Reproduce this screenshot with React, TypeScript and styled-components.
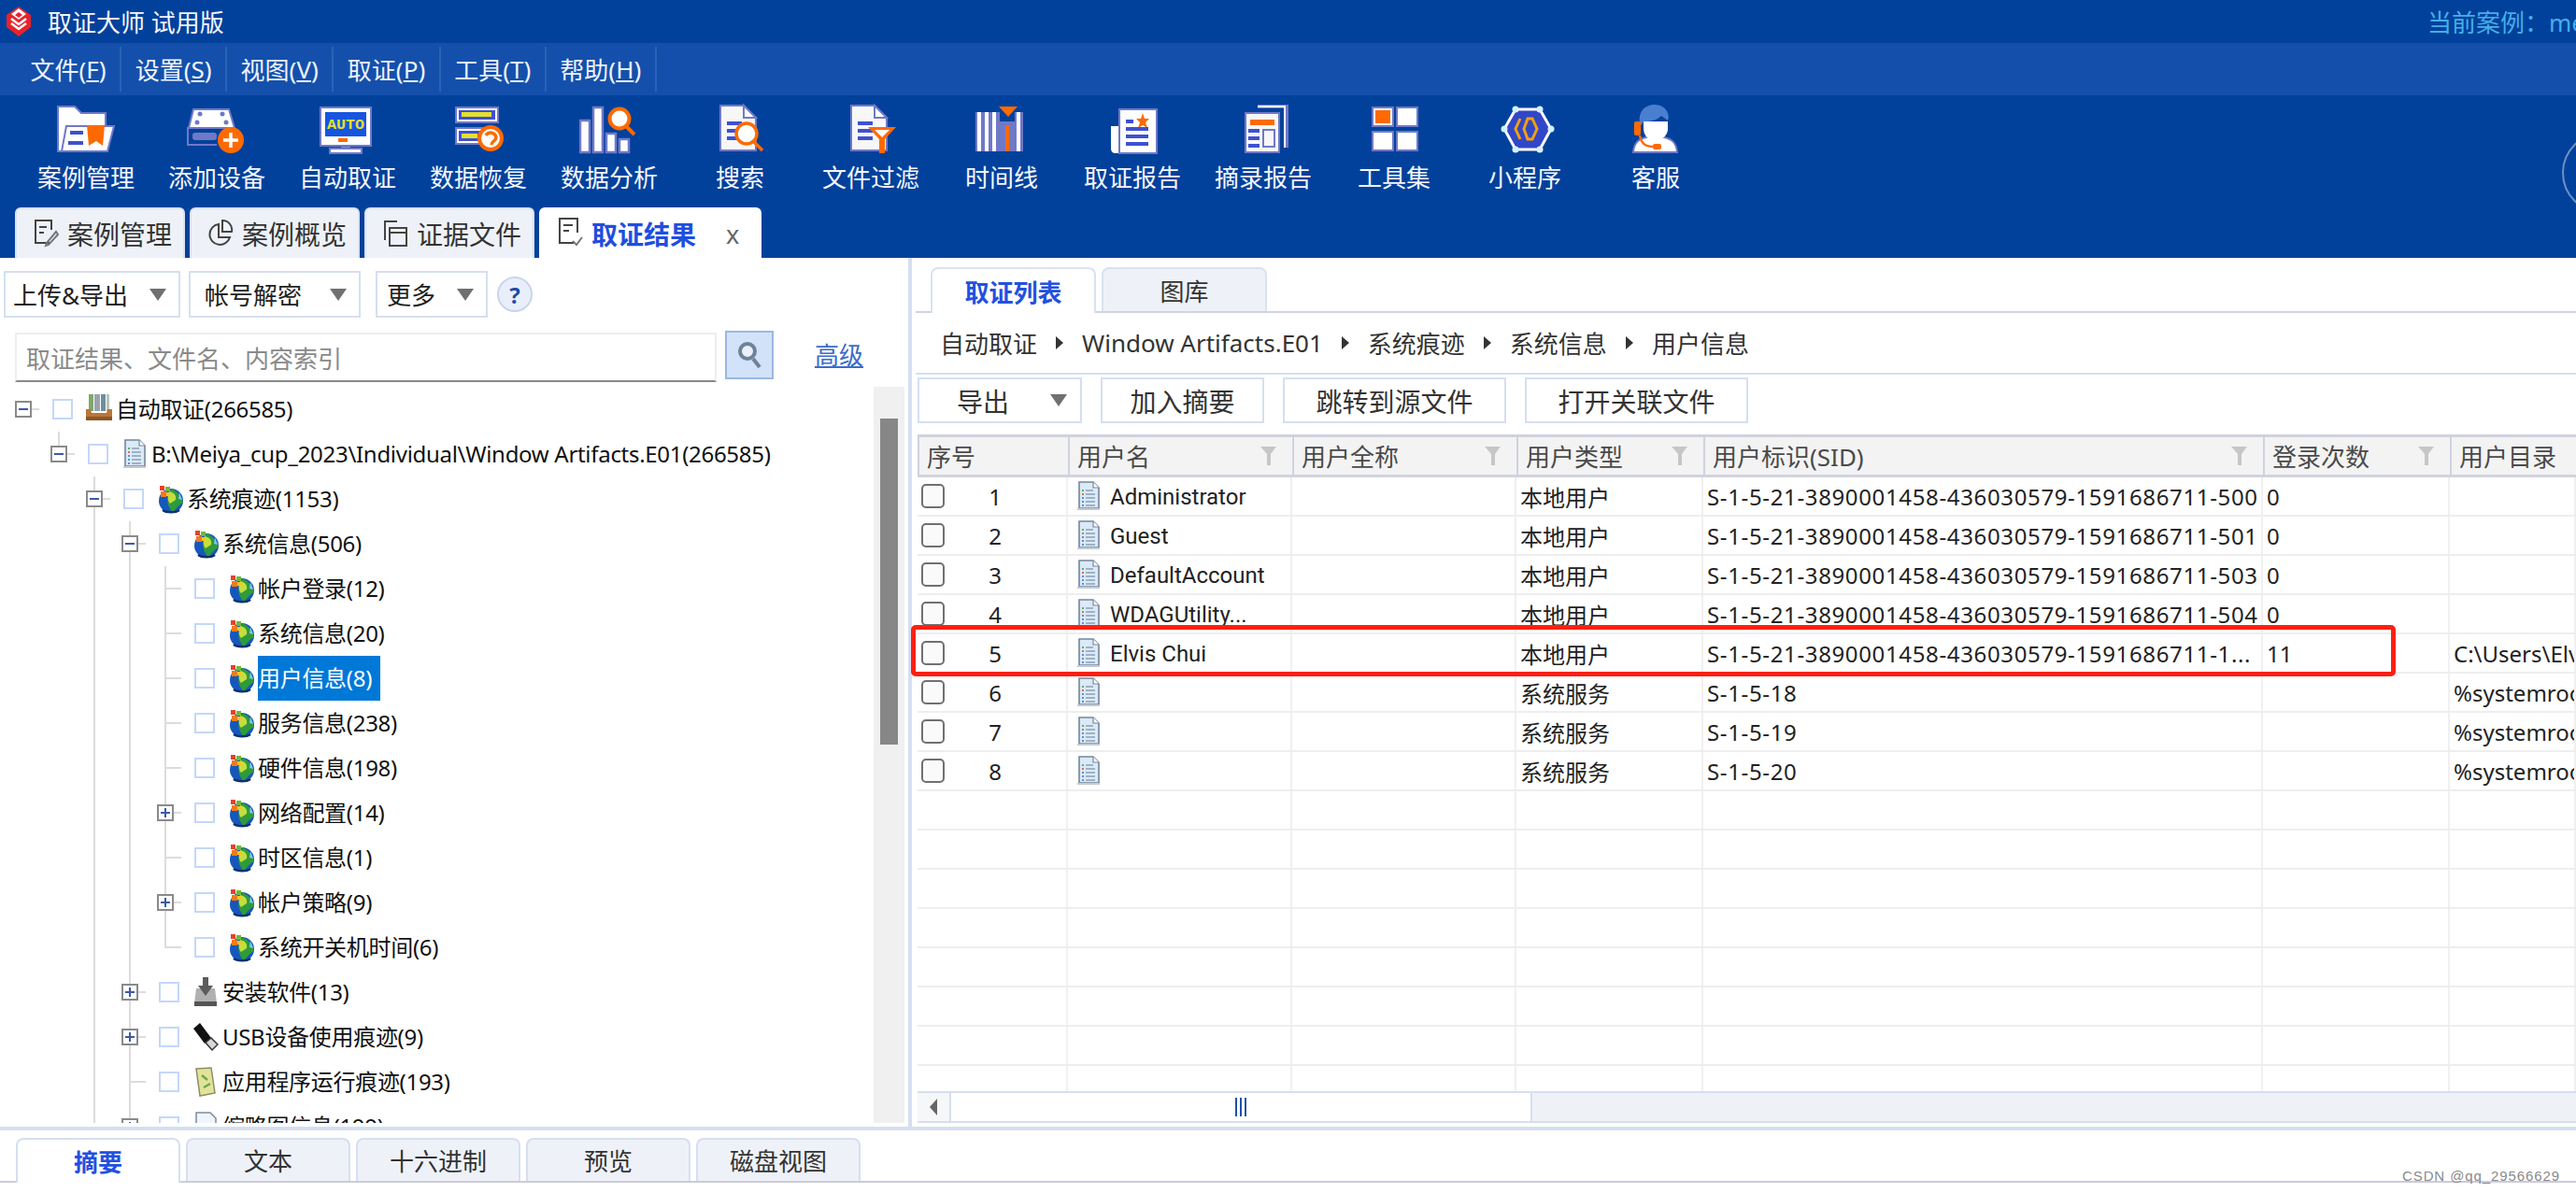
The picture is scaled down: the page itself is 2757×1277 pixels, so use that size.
import React from 'react';
import styled, { createGlobalStyle } from 'styled-components';

const Global = createGlobalStyle`
  html, body { margin: 0; padding: 0; background: #fff; overflow: hidden; }
  * { box-sizing: border-box; }
  body { font-family: "Noto Sans", "Noto Sans CJK SC", sans-serif; }
`;

const Page = styled.div`
  position: relative;
  width: 2757px;
  height: 1277px;
  overflow: hidden;
  display: flex;
  flex-direction: column;
  background: #fff;
  color: #1a1a1a;
`;

const Header = styled.header`
  position: relative;
  background: #02419b;
  flex: none;
`;

const TitleBar = styled.div`
  height: 46px;
  display: flex;
  align-items: center;
  padding-left: 6px;
  color: #f4f7ff;
  font-size: 26px;
`;

const TitleText = styled.span`
  margin-left: 17px;
`;

const CaseName = styled.span`
  margin-left: auto;
  width: 159px;
  white-space: nowrap;
  overflow: hidden;
  color: #45aee8;
`;

const MenuBar = styled.nav`
  height: 56px;
  background: #1450ab;
  display: flex;
  align-items: center;
  padding-left: 18px;
  color: #eef3ff;
  font-size: 26px;
`;

const MenuItem = styled.div`
  height: 48px;
  display: flex;
  align-items: center;
  padding: 0 14.5px;
  border-right: 2px solid #2a62b8;
`;

const Toolbar = styled.div`
  height: 120px;
  display: grid;
  grid-template-columns: repeat(13, 140px);
  padding: 8px 0 0 22px;
`;

const Tool = styled.div`
  display: flex;
  flex-direction: column;
  align-items: center;
  color: #f4f7ff;
  font-size: 26px;
  line-height: 32px;
  white-space: nowrap;
  gap: 4px;
`;

const HeaderArc = styled.svg`
  position: absolute;
  right: 0;
  top: 140px;
`;

const TabStrip = styled.div`
  height: 54px;
  display: flex;
  align-items: flex-end;
  padding-left: 16px;
  gap: 5px;
`;

const MainTab = styled.div<{ $active?: boolean }>`
  width: ${p => (p.$active ? 238 : 182)}px;
  height: 54px;
  display: flex;
  align-items: center;
  padding-left: 18px;
  gap: 9px;
  border-radius: 6px 6px 0 0;
  border: 2px solid ${p => (p.$active ? '#fff' : '#d9e2f2')};
  border-bottom: none;
  background: ${p => (p.$active ? '#fff' : '#eef2f8')};
  color: ${p => (p.$active ? '#1f4ee0' : '#333')};
  font-size: 28px;
  font-weight: ${p => (p.$active ? 700 : 400)};
  white-space: nowrap;
`;

const CloseMark = styled.span`
  margin-left: 23px;
  font-size: 27px;
  font-weight: 400;
  color: #666;
`;

const Body = styled.main`
  flex: none;
  height: 930px;
  display: flex;
`;

const LeftPanel = styled.section`
  width: 976px;
  flex: none;
  display: flex;
  flex-direction: column;
  border-right: 4px solid #d5dff0;
  padding-bottom: 4px;
`;

const ActionRow = styled.div`
  display: flex;
  align-items: center;
  height: 50px;
  margin-top: 14px;
  padding-left: 4px;
`;

const DropButton = styled.div<{ $w: number; $ml?: number; $pl: number }>`
  width: ${p => p.$w}px;
  height: 50px;
  margin-left: ${p => p.$ml ?? 0}px;
  padding-left: ${p => p.$pl}px;
  padding-right: 13px;
  display: flex;
  align-items: center;
  border: 2px solid #d5dff0;
  font-size: 26px;
  color: #222;
  white-space: nowrap;
`;

const Caret = styled.i`
  margin-left: auto;
  width: 0;
  height: 0;
  border-left: 9px solid transparent;
  border-right: 9px solid transparent;
  border-top: 13px solid #707070;
`;

const HelpBadge = styled.div`
  width: 38px;
  height: 38px;
  margin-left: 10px;
  border-radius: 50%;
  background: #e9effa;
  border: 2px solid #c8d5ec;
  color: #1f4aa8;
  display: flex;
  align-items: center;
  justify-content: center;
  font-weight: 700;
  font-size: 24px;
`;

const SearchRow = styled.div`
  display: flex;
  height: 53px;
  margin-top: 14px;
  padding-left: 16px;
  align-items: flex-start;
`;

const SearchBox = styled.div`
  width: 751px;
  height: 53px;
  margin-top: 2px;
  padding-left: 10px;
  display: flex;
  align-items: center;
  border: 2px solid #eee;
  border-bottom-color: #888;
  color: #8a8a8a;
  font-size: 26px;
`;

const SearchButton = styled.div`
  width: 52px;
  height: 52px;
  margin-left: 9px;
  background: #d2e2f9;
  border: 2px solid #9cb8e0;
  display: flex;
  align-items: center;
  justify-content: center;
`;

const AdvancedLink = styled.a`
  margin: 6px 0 0 44px;
  color: #3a6ccb;
  font-size: 26px;
  text-decoration: underline;
`;

const TreeArea = styled.div`
  flex: 1;
  min-height: 0;
  margin-top: 7px;
  display: flex;
`;

const TreeList = styled.div`
  width: 935px;
  overflow: hidden;
`;

const TreeRow = styled.div<{ $level: number }>`
  position: relative;
  height: 48px;
  display: flex;
  align-items: center;
  padding-left: ${p => 16 + p.$level * 38}px;
  font-size: 24px;
  white-space: nowrap;
  color: #111;
`;

const Guide = styled.i<{ $x: number; $h: string }>`
  position: absolute;
  left: ${p => p.$x}px;
  top: 0;
  height: ${p => p.$h};
  width: 2px;
  background: #dcdcdc;
`;

const Tick = styled.i<{ $x: number }>`
  position: absolute;
  left: ${p => p.$x}px;
  top: 23px;
  width: 18px;
  height: 2px;
  background: #dcdcdc;
`;

const ExpanderSlot = styled.div`
  position: relative;
  width: 18px;
  height: 18px;
  margin-right: 22px;
  flex: none;
`;

const ExpanderBox = styled.div`
  width: 18px;
  height: 18px;
  background: #fff;
  border: 2px solid #8a8a8a;
  display: flex;
  align-items: center;
  justify-content: center;
`;

const TreeCheck = styled.div`
  position: relative;
  width: 22px;
  height: 22px;
  flex: none;
  margin-right: 14px;
  border: 2px solid #c4d7fa;
  background: #fff;
`;

const TreeIconBox = styled.div`
  width: 28px;
  height: 32px;
  flex: none;
  margin-right: 4px;
  display: flex;
  align-items: center;
  justify-content: center;
`;

const TreeLabel = styled.span<{ $selected?: boolean }>`
  height: 48px;
  line-height: 48px;
  padding-right: ${p => (p.$selected ? 9 : 0)}px;
  background: ${p => (p.$selected ? '#0078d7' : 'transparent')};
  color: ${p => (p.$selected ? '#fff' : '#111')};
  letter-spacing: -0.3px;
`;

const TreeScroll = styled.div`
  width: 33px;
  background: #f0f0f0;
  padding: 34px 7px 0;
`;

const TreeThumb = styled.div`
  height: 349px;
  background: #878787;
`;

const RightPanel = styled.section`
  flex: 1;
  min-width: 0;
  display: flex;
  flex-direction: column;
  padding: 10px 0 4px 4px;
`;

const SubTabs = styled.div`
  height: 49px;
  display: flex;
  gap: 6px;
  padding-left: 16px;
  border-bottom: 2px solid #cfd3e2;
  flex: none;
`;

const SubTab = styled.div<{ $active?: boolean }>`
  width: 177px;
  height: ${p => (p.$active ? 49 : 47)}px;
  display: flex;
  align-items: center;
  justify-content: center;
  border: 2px solid #d9e2f2;
  border-bottom: none;
  border-radius: 8px 8px 0 0;
  background: ${p => (p.$active ? '#fff' : '#eef2f8')};
  color: ${p => (p.$active ? '#2350e0' : '#333')};
  font-size: 26px;
  font-weight: ${p => (p.$active ? 700 : 400)};
`;

const Breadcrumb = styled.div`
  flex: none;
  height: 66px;
  display: flex;
  align-items: center;
  padding-left: 26px;
  gap: 20px;
  font-size: 26px;
  color: #333;
  border-bottom: 2px solid #d5dff0;
  white-space: nowrap;
`;

const CrumbArrow = styled.i`
  width: 0;
  height: 0;
  border-top: 7px solid transparent;
  border-bottom: 7px solid transparent;
  border-left: 8px solid #333;
`;

const TableActions = styled.div`
  flex: none;
  height: 49px;
  margin: 3px 0 12px;
  padding-left: 2px;
  display: flex;
  gap: 20px;
`;

const ActButton = styled.div<{ $w: number }>`
  width: ${p => p.$w}px;
  height: 49px;
  display: flex;
  align-items: center;
  justify-content: center;
  border: 2px solid #d5dff0;
  font-size: 28px;
  color: #333;
`;

const ExportButton = styled(ActButton)`
  justify-content: flex-start;
  padding: 0 14px 0 40px;
`;

const TableWrap = styled.div`
  flex: 1;
  min-height: 0;
  margin-left: 2px;
  overflow: hidden;
`;

const columns = '161px 240px 240px 200px 599px 200px 135px';

const HeadRow = styled.div`
  display: grid;
  grid-template-columns: ${columns};
  height: 46px;
  background: #f3f3f3;
  border-top: 3px solid #d0d2de;
  border-bottom: 3px solid #d0d2de;
  border-left: 2px solid #d0d2de;
`;

const HeadCell = styled.div`
  display: flex;
  align-items: center;
  padding: 0 17px 0 8px;
  border-right: 2px solid #d0d2de;
  font-size: 26px;
  color: #4a4a4a;
  white-space: nowrap;
  overflow: hidden;
`;

const FilterMark = styled.svg`
  margin-left: auto;
  flex: none;
`;

const DataRow = styled.div`
  display: grid;
  grid-template-columns: ${columns};
  height: 42px;
  border-bottom: 2px solid #eee;
`;

const Cell = styled.div`
  display: flex;
  align-items: center;
  padding-left: 4px;
  border-right: 2px solid #f0f0f0;
  font-size: 24px;
  color: #222;
  white-space: nowrap;
  overflow: hidden;
`;

const NameCell = styled(Cell)`
  padding-left: 9px;
`;

const NameText = styled.span`
  font-family: Roboto, "Noto Sans CJK SC", sans-serif;
  margin-left: 10px;
  line-height: 34px;
  padding-top: 1px;
`;

const SidText = styled.span`
  letter-spacing: 0.64px;
`;

const RowCheck = styled.div`
  width: 25px;
  height: 26px;
  flex: none;
  border: 2px solid #707070;
  border-radius: 5px;
  background: #fafafa;
`;

const RowNumber = styled.span`
  width: 108px;
  text-align: center;
`;

const HScroll = styled.div`
  flex: none;
  height: 34px;
  margin-left: 2px;
  display: flex;
  background: #eef2f7;
  border-top: 2px solid #d5dff0;
  border-bottom: 2px solid #d5dff0;
`;

const HScrollLeft = styled.div`
  width: 36px;
  display: flex;
  align-items: center;
  justify-content: center;
  background: #f6f7f9;
  border-right: 2px solid #d5dff0;
`;

const HScrollArrow = styled.i`
  width: 0;
  height: 0;
  border-top: 9px solid transparent;
  border-bottom: 9px solid transparent;
  border-right: 8px solid #666;
`;

const HScrollThumb = styled.div`
  width: 622px;
  background: #fff;
  border-right: 2px solid #d5dff0;
  display: flex;
  align-items: center;
  justify-content: center;
`;

const Grip = styled.i`
  width: 12px;
  height: 20px;
  border-left: 2px solid #1d50a8;
  border-right: 2px solid #1d50a8;
  position: relative;
  &::after {
    content: '';
    position: absolute;
    left: 3px;
    top: 0;
    width: 2px;
    height: 20px;
    background: #1d50a8;
  }
`;

const SplitLine = styled.div`
  flex: none;
  height: 4px;
  background: #d5dff0;
`;

const BottomTabs = styled.div`
  flex: none;
  height: 56px;
  padding: 8px 0 0 17px;
  display: flex;
  gap: 6px;
  border-bottom: 2px solid #cdcadc;
`;

const BottomTab = styled.div<{ $active?: boolean }>`
  width: 176px;
  height: ${p => (p.$active ? 48 : 46)}px;
  display: flex;
  align-items: center;
  justify-content: center;
  border: 2px solid #d5dff0;
  border-bottom: none;
  border-radius: 8px 8px 0 0;
  background: ${p => (p.$active ? '#fff' : '#eef2f8')};
  color: ${p => (p.$active ? '#2350e0' : '#333')};
  font-size: 26px;
  font-weight: ${p => (p.$active ? 700 : 400)};
`;

const RedBox = styled.div`
  position: absolute;
  left: 975px;
  top: 669px;
  width: 1589px;
  height: 55px;
  border: 5px solid #ff2010;
  border-radius: 5px;
  pointer-events: none;
`;

const Watermark = styled.div`
  position: absolute;
  left: 2571px;
  top: 1250px;
  font-size: 15px;
  color: #8a8a8a;
  font-family: "Liberation Sans", sans-serif;
  white-space: nowrap;
  letter-spacing: 0.9px;
`;

/* ---------- drawings ---------- */
const B = '#6f79c8';
const W = '#fff';
const F = '#f7f7f8';
const L = '#3f50d2';
const O = '#ff6a00';

const Ico: React.FC<{ children: React.ReactNode }> = ({ children }) => (
  <svg width="64" height="60" viewBox="0 0 64 60">{children}</svg>
);

const Logo = () => (
  <svg width="28" height="32" viewBox="0 0 28 32">
    <polygon points="14,0 27,9 27,22 14,32 1,22 1,9" fill="#e8232a" />
    <polygon points="14,2 22,8 14,14 6,8" fill="#fff" />
    <path d="M6 13l8 6 8-6M6 18l8 6 8-6" stroke="#fff" strokeWidth="2.5" fill="none" />
    <path d="M14 6l4 3-4 3-4-3z" fill="#e8232a" />
  </svg>
);

const IconCase = () => (
  <Ico>
    <path d="M2 4H20L27 11H53V52H2Z" fill={W} stroke={B} strokeWidth="2" />
    <path d="M11 25H62L55 52H6Z" fill={W} stroke={B} strokeWidth="2" />
    <rect x="15" y="30" width="14" height="4" fill={L} />
    <rect x="13" y="41" width="16" height="4" fill={L} />
    <path d="M33 24H52L50 46L43 41L35 46Z" fill={O} />
  </Ico>
);
const IconDevice = () => (
  <Ico>
    <path d="M7 7H45L51 27H2Z" fill={W} stroke={B} strokeWidth="2" />
    <circle cx="14" cy="12" r="2.5" fill={B} /><circle cx="38" cy="12" r="2.5" fill={B} />
    <circle cx="11" cy="21" r="2.5" fill={B} /><circle cx="42" cy="21" r="2.5" fill={B} />
    <path d="M32 45H1V27H48" fill="#02419b" stroke={B} strokeWidth="2" />
    <rect x="6" y="32" width="26" height="8" rx="3" fill={B} />
    <circle cx="47" cy="40" r="14" fill={O} />
    <path d="M47 32v16M39 40h16" stroke={W} strokeWidth="3.5" />
  </Ico>
);
const IconAuto = () => (
  <Ico>
    <rect x="3" y="5" width="54" height="41" fill={W} stroke={B} strokeWidth="2" />
    <rect x="8" y="10" width="44" height="26" fill="#1655e0" />
    <text x="10" y="28" fontFamily="Liberation Mono, monospace" fontWeight="700" fontSize="14" fill="#e6e02a" textLength="40" lengthAdjust="spacingAndGlyphs">AUTO</text>
    <rect x="22" y="38" width="10" height="4" fill={O} />
    <rect x="25" y="46" width="10" height="3" fill={B} />
    <rect x="13" y="49" width="34" height="5" fill={W} stroke={B} strokeWidth="2" />
  </Ico>
);
const IconRecover = () => (
  <Ico>
    <rect x="8" y="5" width="45" height="16" fill={W} stroke={B} strokeWidth="2" />
    <rect x="11" y="8" width="39" height="10" fill={L} />
    <rect x="14" y="10" width="32" height="5" fill="#e6e02a" />
    <rect x="8" y="27" width="28" height="17" fill={W} stroke={B} strokeWidth="2" />
    <rect x="11" y="30" width="26" height="11" fill={L} />
    <rect x="14" y="33" width="17" height="5" fill="#e6e02a" />
    <circle cx="45" cy="38" r="14" fill={O} />
    <circle cx="45" cy="38" r="10" fill={W} />
    <path d="M40 35a6 6 0 0 1 11 2c0 4-5 4-5 8" stroke={O} strokeWidth="3.5" fill="none" />
  </Ico>
);
const IconAnalyze = () => (
  <Ico>
    <rect x="1" y="19" width="10" height="34" fill={W} stroke={B} strokeWidth="2.5" />
    <rect x="15" y="5" width="10" height="48" fill={W} stroke={B} strokeWidth="2.5" />
    <rect x="29" y="33" width="10" height="20" fill={W} stroke={B} strokeWidth="2.5" />
    <rect x="43" y="39" width="10" height="14" fill={W} stroke={B} strokeWidth="2.5" />
    <circle cx="43" cy="17" r="10.5" fill={W} stroke={O} strokeWidth="4" />
    <path d="M50 25l9 9" stroke={O} strokeWidth="4" />
  </Ico>
);
const DocShape = () => (
  <>
    <path d="M11 3H36L49 16V51H11Z" fill={F} stroke={B} strokeWidth="2" />
    <path d="M36 3V16H49Z" fill={W} stroke={B} strokeWidth="2" />
    <rect x="18" y="20" width="16" height="4" fill={L} />
    <rect x="18" y="28" width="16" height="4" fill={L} />
    <rect x="18" y="36" width="16" height="4" fill={L} />
  </>
);
const IconSearch = () => (
  <Ico>
    <DocShape />
    <circle cx="39" cy="33" r="11" fill={W} stroke={O} strokeWidth="3.5" />
    <path d="M46 41l10 10" stroke={O} strokeWidth="3.5" />
  </Ico>
);
const IconFilter = () => (
  <Ico>
    <DocShape />
    <path d="M29 26H59L47 39V54H41V39Z" fill={O} />
    <path d="M36 29H52L44 37Z" fill={W} />
  </Ico>
);
const IconTimeline = () => (
  <Ico>
    <rect x="4" y="10" width="51" height="42" fill={B} />
    <path d="M8 10V52M16 10V52M24 10V52M50 10V52" stroke={W} strokeWidth="4" />
    <rect x="30" y="10" width="16" height="42" fill={B} />
    <rect x="30" y="10" width="16" height="10" fill="#02419b" />
    <rect x="36" y="24" width="4" height="28" fill={O} />
    <path d="M29 4H49L39 15Z" fill={O} />
  </Ico>
);
const IconReport = () => (
  <Ico>
    <path d="M9 25H18V54H14Q9 54 9 49Z" fill={W} />
    <rect x="18" y="7" width="40" height="47" fill={W} stroke={B} strokeWidth="2" />
    <path d="M43 11l2 6h5l-4 4 2 6-5-3-5 3 2-6-4-4h5z" fill={O} />
    <rect x="25" y="18" width="8" height="4" fill={L} />
    <rect x="25" y="26" width="24" height="4" fill={L} />
    <rect x="25" y="34" width="24" height="4" fill={L} />
    <rect x="25" y="42" width="24" height="4" fill={L} />
  </Ico>
);
const IconExcerpt = () => (
  <Ico>
    <path d="M26 4H57V48" fill="none" stroke={B} strokeWidth="4" />
    <path d="M26 4H55V48" fill="none" stroke={W} strokeWidth="2" />
    <rect x="13" y="11" width="36" height="42" fill={F} stroke={B} strokeWidth="2" />
    <rect x="18" y="18" width="26" height="6" fill={O} />
    <rect x="16" y="28" width="12" height="4" fill={L} />
    <rect x="16" y="36" width="12" height="4" fill={L} />
    <rect x="16" y="44" width="12" height="4" fill={L} />
    <rect x="32" y="29" width="12" height="18" fill={F} stroke={B} strokeWidth="2" />
  </Ico>
);
const IconTools = () => (
  <Ico>
    <rect x="9" y="5" width="22" height="20" fill={W} stroke={B} strokeWidth="2" />
    <rect x="12" y="8" width="16" height="14" fill={O} />
    <rect x="35" y="5" width="22" height="20" fill={W} stroke={B} strokeWidth="2" />
    <rect x="9" y="31" width="22" height="20" fill={W} stroke={B} strokeWidth="2" />
    <rect x="35" y="31" width="22" height="20" fill={W} stroke={B} strokeWidth="2" />
  </Ico>
);
const IconMini = () => (
  <Ico>
    <polygon points="22,7 48,7 60,28 48,50 22,50 10,28" fill="#3247c8" stroke={W} strokeWidth="3" />
    <g fill="#d6f2ff">
      <circle cx="22" cy="7" r="3.5" /><circle cx="48" cy="7" r="3.5" /><circle cx="60" cy="28" r="3.5" />
      <circle cx="48" cy="50" r="3.5" /><circle cx="22" cy="50" r="3.5" /><circle cx="10" cy="28" r="3.5" />
    </g>
    <path d="M27 17L22 28L27 39" fill="none" stroke="#f0a010" strokeWidth="3" />
    <path d="M35 17L40 17L45 28L40 39L35 39L31 28Z" fill="none" stroke="#f0a010" strokeWidth="3" />
  </Ico>
);
const IconService = () => (
  <Ico>
    <path d="M8 53C9 42 14 39 22 37H41C49 39 54 42 55 53Z" fill={W} stroke={B} strokeWidth="2" />
    <path d="M19 20H45V28C45 35 38 41 31 41C24 41 19 34 19 28Z" fill={W} />
    <path d="M15 22C13 10 20 2 31 2C42 2 48 12 45 19L38 14C32 20 24 20 19 20L17 24Z" fill="#4a7ecf" />
    <rect x="9" y="20" width="7" height="15" rx="2" fill={O} />
    <path d="M15 35C17 45 22 47 30 47" stroke={O} strokeWidth="2.5" fill="none" />
    <rect x="29" y="44" width="9" height="6" rx="2" fill={O} />
  </Ico>
);

const Globe = () => (
  <svg width="28" height="32" viewBox="0 0 28 32">
    <circle cx="15" cy="18" r="13" fill="#1557bb" />
    <path d="M15 5C21 7 27 13 28 20C24 22 20 26 17 31C13 26 10 20 12 14Z" fill="#2f9a3c" />
    <path d="M13 8c5 1 8 4 7 9l-6 4c-3-3-3-9-1-13z" fill="#c4de3e" />
    <path d="M24 9l3 8-4-1z" fill="#7fc8e8" />
    <rect x="3" y="2" width="5" height="5" fill="#e8402a" />
    <rect x="9" y="3" width="5" height="5" fill="#6fb83a" />
    <rect x="4" y="8" width="6" height="6" fill="#f07a1c" />
    <rect x="10" y="9" width="4" height="4" fill="#f6c623" />
    <path d="M6 28c4 3 14 3 18 0" stroke="#0c2f70" strokeWidth="2.5" fill="none" />
  </svg>
);
const ArchiveIcon = () => (
  <svg width="28" height="32" viewBox="0 0 28 32">
    <rect x="3" y="0" width="5" height="18" fill="#7fa86a" />
    <rect x="9" y="0" width="6" height="18" fill="#9aa4b0" />
    <rect x="16" y="0" width="5" height="18" fill="#6f8f9a" />
    <rect x="22" y="0" width="3" height="18" fill="#b7c4ba" />
    <path d="M0 16L5 16L6 20H22L23 16H28V28H0Z" fill="#b9763a" />
    <rect x="0" y="24" width="28" height="4" fill="#8d5626" />
  </svg>
);
const PageIcon: React.FC<{ w?: number; h?: number }> = ({ w = 26, h = 32 }) => (
  <svg width={w} height={h} viewBox="0 0 26 32">
    <path d="M3 1H18L24 7V29H3Z" fill="#dbeaf7" stroke="#74869c" strokeWidth="1.6" />
    <path d="M18 1V7H24" fill="#fff" stroke="#74869c" strokeWidth="1.2" />
    <g strokeWidth="1.6">
      <path d="M6 10h2" stroke="#2f9a3c" /><path d="M10 10h8" stroke="#8fa4ba" />
      <path d="M6 14h2" stroke="#d8452a" /><path d="M10 14h10" stroke="#8fa4ba" />
      <path d="M6 18h2" stroke="#3a6cd0" /><path d="M10 18h10" stroke="#8fa4ba" />
      <path d="M6 22h2" stroke="#3a6cd0" /><path d="M10 22h10" stroke="#8fa4ba" />
      <path d="M6 26h2" stroke="#3a6cd0" /><path d="M10 26h10" stroke="#8fa4ba" />
    </g>
    <path d="M1 30h24" stroke="#c4cad2" strokeWidth="2" />
  </svg>
);
const InstallIcon = () => (
  <svg width="28" height="32" viewBox="0 0 28 32">
    <path d="M4 12H24L26 28H2Z" fill="#b0b0b0" />
    <rect x="2" y="26" width="24" height="5" fill="#555" />
    <path d="M11 0H17V9H22L14 20L6 9H11Z" fill="#5c5c5c" />
  </svg>
);
const UsbIcon = () => (
  <svg width="28" height="32" viewBox="0 0 28 32">
    <path d="M8 1L20 17L13 23L1 7Z" fill="#111" />
    <path d="M14 22L20 17L27 24L21 30Z" fill="#d8d8d8" stroke="#333" strokeWidth="1.5" />
  </svg>
);
const NoteIcon = () => (
  <svg width="28" height="32" viewBox="0 0 28 32">
    <path d="M4 2L20 1L24 28L8 31Z" fill="#e2e39a" stroke="#8d8d66" strokeWidth="1.5" />
    <path d="M10 9l6 5M12 22l7-4" stroke="#6ea84a" strokeWidth="2.5" />
  </svg>
);
const ThumbIcon = () => (
  <svg width="28" height="32" viewBox="0 0 28 32">
    <path d="M4 1H19L25 7V31H4Z" fill="#eef5fb" stroke="#7b8ca0" strokeWidth="1.5" />
    <circle cx="11" cy="20" r="5" fill="#3fa34a" />
  </svg>
);
const iconMap: Record<string, React.FC> = {
  globe: Globe, archive: ArchiveIcon, page: PageIcon as React.FC,
  install: InstallIcon, usb: UsbIcon, note: NoteIcon, thumb: ThumbIcon,
};

const FilterIcon = () => (
  <FilterMark width="17" height="20" viewBox="0 0 17 20">
    <path d="M0 0H17L11 8V20H7V8Z" fill="#c6c6c6" />
  </FilterMark>
);

const TabSvg: React.FC<{ children: React.ReactNode }> = ({ children }) => (
  <svg width="27" height="34" viewBox="0 0 27 34" fill="none" stroke="#444" strokeWidth="2">{children}</svg>
);

const TabIcons = [
  <TabSvg key="a"><path d="M17 27H2V3H19V13M6 10H14M6 16H11" /><path d="M14 27L24 15L26 18L16 29L13 30Z" stroke="#777" /></TabSvg>,
  <TabSvg key="b"><path d="M11 7A11 11 0 1 0 23 21H11Z" /><path d="M15 3A10 10 0 0 1 25 15H15Z" /></TabSvg>,
  <TabSvg key="c"><path d="M2 24V4H15" /><rect x="7" y="11" width="18" height="19" /><path d="M7 16H25" /></TabSvg>,
  <TabSvg key="d"><path d="M17 27H2V1H21V16M6 8H16M6 14H12" /><path d="M16 25L20 29L26 21" stroke="#777" /></TabSvg>,
];

/* ---------- data ---------- */
const tools: [string, React.FC][] = [
  ['案例管理', IconCase], ['添加设备', IconDevice], ['自动取证', IconAuto], ['数据恢复', IconRecover],
  ['数据分析', IconAnalyze], ['搜索', IconSearch], ['文件过滤', IconFilter], ['时间线', IconTimeline],
  ['取证报告', IconReport], ['摘录报告', IconExcerpt], ['工具集', IconTools], ['小程序', IconMini], ['客服', IconService],
];
const menus: [string, string][] = [['文件', 'F'], ['设置', 'S'], ['视图', 'V'], ['取证', 'P'], ['工具', 'T'], ['帮助', 'H']];

type Node = { level: number; label: string; icon: string; exp?: '+' | '-'; guides: [number, string][]; selected?: boolean };
const g100: [number, string] = [100, '48px'];
const g138: [number, string] = [138, '48px'];
const g176: [number, string] = [176, '48px'];
const leaf = (label: string, exp?: '+', selected?: boolean): Node => ({ level: 4, label, icon: 'globe', exp, selected, guides: [g100, g138, g176] });
const tree: Node[] = [
  { level: 0, label: '自动取证(266585)', icon: 'archive', exp: '-', guides: [] },
  { level: 1, label: 'B:\\Meiya_cup_2023\\Individual\\Window Artifacts.E01(266585)', icon: 'page', exp: '-', guides: [[62, '16px']] },
  { level: 2, label: '系统痕迹(1153)', icon: 'globe', exp: '-', guides: [g100] },
  { level: 3, label: '系统信息(506)', icon: 'globe', exp: '-', guides: [g100, g138] },
  leaf('帐户登录(12)'),
  leaf('系统信息(20)'),
  leaf('用户信息(8)', undefined, true),
  leaf('服务信息(238)'),
  leaf('硬件信息(198)'),
  leaf('网络配置(14)', '+'),
  leaf('时区信息(1)'),
  leaf('帐户策略(9)', '+'),
  { level: 4, label: '系统开关机时间(6)', icon: 'globe', guides: [g100, g138, [176, '24px']] },
  { level: 3, label: '安装软件(13)', icon: 'install', exp: '+', guides: [g100, g138] },
  { level: 3, label: 'USB设备使用痕迹(9)', icon: 'usb', exp: '+', guides: [g100, g138] },
  { level: 3, label: '应用程序运行痕迹(193)', icon: 'note', guides: [g100, g138] },
  { level: 3, label: '缩略图信息(199)', icon: 'thumb', exp: '+', guides: [g100, g138] },
];

const heads: [string, boolean][] = [
  ['序号', false], ['用户名', true], ['用户全称', true], ['用户类型', true], ['用户标识(SID)', true], ['登录次数', true], ['用户目录', false],
];
const sidBase = 'S-1-5-21-3890001458-436030579-1591686711-';
const rows = [
  ['Administrator', '本地用户', sidBase + '500', '0', ''],
  ['Guest', '本地用户', sidBase + '501', '0', ''],
  ['DefaultAccount', '本地用户', sidBase + '503', '0', ''],
  ['WDAGUtility...', '本地用户', sidBase + '504', '0', ''],
  ['Elvis Chui', '本地用户', sidBase + '1...', '11', 'C:\\Users\\Elvis Chui'],
  ['', '系统服务', 'S-1-5-18', '', '%systemroot%\\system32'],
  ['', '系统服务', 'S-1-5-19', '', '%systemroot%\\system32'],
  ['', '系统服务', 'S-1-5-20', '', '%systemroot%\\system32'],
];

const Expander: React.FC<{ kind: '+' | '-' }> = ({ kind }) => (
  <ExpanderBox>
    <svg width="14" height="14" viewBox="0 0 14 14">
      <path d="M2 7H12" stroke="#3a5aa8" strokeWidth="2" />
      {kind === '+' && <path d="M7 2V12" stroke="#3a5aa8" strokeWidth="2" />}
    </svg>
  </ExpanderBox>
);

export default function App() {
  return (
    <Page>
      <Global />
      <Header>
        <TitleBar>
          <Logo />
          <TitleText>取证大师 试用版</TitleText>
          <CaseName>当前案例：meiya</CaseName>
        </TitleBar>
        <MenuBar>
          {menus.map(([t, k]) => (
            <MenuItem key={k}>{t}(<u>{k}</u>)</MenuItem>
          ))}
        </MenuBar>
        <Toolbar>
          {tools.map(([label, Icon]) => (
            <Tool key={label}><Icon /><span>{label}</span></Tool>
          ))}
        </Toolbar>
        <HeaderArc width="16" height="90" viewBox="0 0 16 90">
          <circle cx="44" cy="45" r="42" fill="none" stroke="#6f8fc4" strokeWidth="2" />
        </HeaderArc>
        <TabStrip>
          <MainTab>{TabIcons[0]}案例管理</MainTab>
          <MainTab>{TabIcons[1]}案例概览</MainTab>
          <MainTab>{TabIcons[2]}证据文件</MainTab>
          <MainTab $active>{TabIcons[3]}取证结果<CloseMark>x</CloseMark></MainTab>
        </TabStrip>
      </Header>

      <Body>
        <LeftPanel>
          <ActionRow>
            <DropButton $w={189} $pl={8}>上传&amp;导出<Caret /></DropButton>
            <DropButton $w={184} $ml={9} $pl={15}>帐号解密<Caret /></DropButton>
            <DropButton $w={120} $ml={16} $pl={10}>更多<Caret /></DropButton>
            <HelpBadge>?</HelpBadge>
          </ActionRow>
          <SearchRow>
            <SearchBox>取证结果、文件名、内容索引</SearchBox>
            <SearchButton>
              <svg width="28" height="32" viewBox="0 0 28 32" fill="none" stroke="#6f8396" strokeWidth="4">
                <circle cx="12" cy="12" r="8" fill="#e8f1fc" />
                <path d="M18 20L25 29" />
              </svg>
            </SearchButton>
            <AdvancedLink>高级</AdvancedLink>
          </SearchRow>
          <TreeArea>
            <TreeList>
              {tree.map(n => {
                const Icon = iconMap[n.icon];
                return (
                  <TreeRow key={n.label} $level={n.level}>
                    {n.guides.map(([x, h]) => <Guide key={x} $x={x} $h={h} />)}
                    <Tick $x={24 + 38 * n.level} />
                    <ExpanderSlot>{n.exp && <Expander kind={n.exp} />}</ExpanderSlot>
                    <TreeCheck />
                    <TreeIconBox><Icon /></TreeIconBox>
                    <TreeLabel $selected={n.selected}>{n.label}</TreeLabel>
                  </TreeRow>
                );
              })}
            </TreeList>
            <TreeScroll><TreeThumb /></TreeScroll>
          </TreeArea>
        </LeftPanel>

        <RightPanel>
          <SubTabs>
            <SubTab $active>取证列表</SubTab>
            <SubTab>图库</SubTab>
          </SubTabs>
          <Breadcrumb>
            <span>自动取证</span><CrumbArrow />
            <span>Window Artifacts.E01</span><CrumbArrow />
            <span>系统痕迹</span><CrumbArrow />
            <span>系统信息</span><CrumbArrow />
            <span>用户信息</span>
          </Breadcrumb>
          <TableActions>
            <ExportButton $w={176}>导出<Caret /></ExportButton>
            <ActButton $w={175}>加入摘要</ActButton>
            <ActButton $w={239}>跳转到源文件</ActButton>
            <ActButton $w={239}>打开关联文件</ActButton>
          </TableActions>
          <TableWrap>
            <HeadRow>
              {heads.map(([t, f]) => (
                <HeadCell key={t}>{t}{f && <FilterIcon />}</HeadCell>
              ))}
            </HeadRow>
            {Array.from({ length: 17 }, (_, i) => {
              const r = rows[i];
              return (
                <DataRow key={i}>
                  <Cell>{r && <><RowCheck /><RowNumber>{i + 1}</RowNumber></>}</Cell>
                  <NameCell>{r && <><PageIcon /><NameText>{r[0]}</NameText></>}</NameCell>
                  <Cell />
                  <Cell>{r && r[1]}</Cell>
                  <Cell>{r && <SidText>{r[2]}</SidText>}</Cell>
                  <Cell>{r && r[3]}</Cell>
                  <Cell>{r && r[4]}</Cell>
                </DataRow>
              );
            })}
          </TableWrap>
          <HScroll>
            <HScrollLeft><HScrollArrow /></HScrollLeft>
            <HScrollThumb><Grip /></HScrollThumb>
          </HScroll>
        </RightPanel>
      </Body>

      <SplitLine />
      <BottomTabs>
        <BottomTab $active>摘要</BottomTab>
        <BottomTab>文本</BottomTab>
        <BottomTab>十六进制</BottomTab>
        <BottomTab>预览</BottomTab>
        <BottomTab>磁盘视图</BottomTab>
      </BottomTabs>

      <RedBox />
      <Watermark>CSDN @qq_29566629</Watermark>
    </Page>
  );
}
